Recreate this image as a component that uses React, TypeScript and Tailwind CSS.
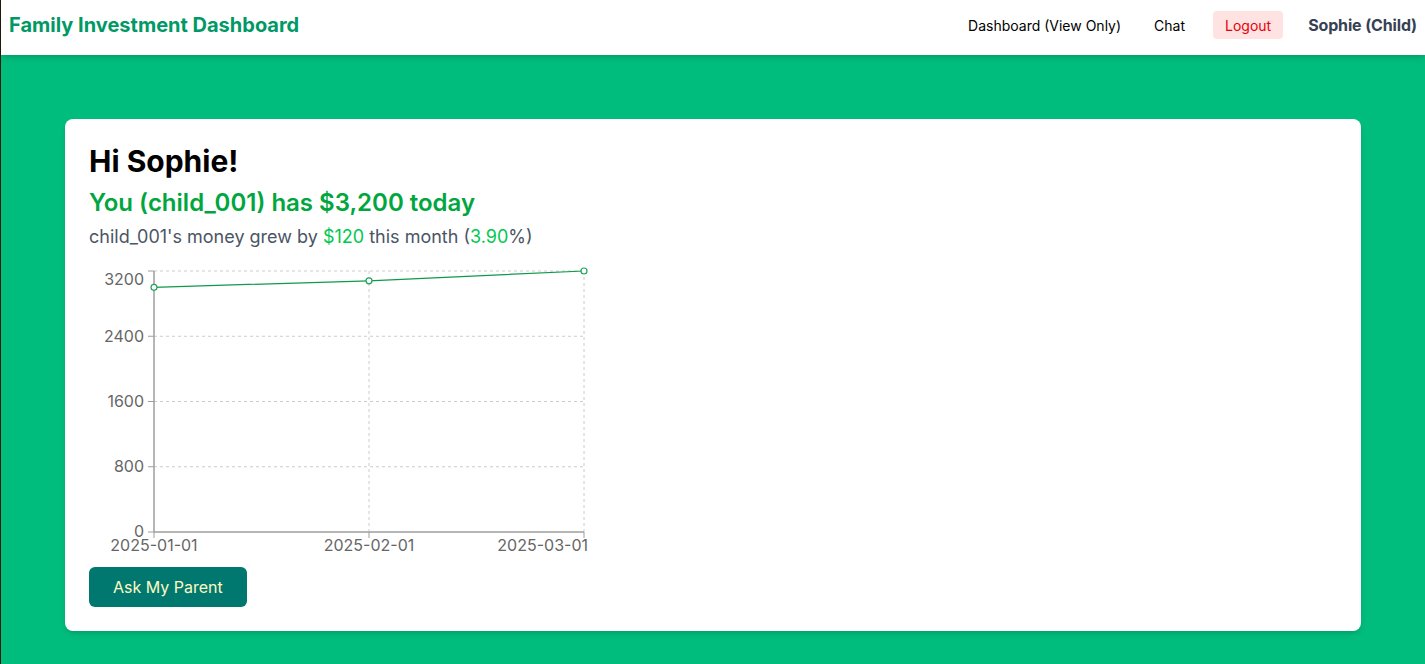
import React from "react";

const data = [
  { x: 65, v: 3000 },
  { x: 280, v: 3080 },
  { x: 495, v: 3200 },
];
const y0 = 281;
const yTop = 20;
const sy = (v: number) => y0 - (v / 3200) * (y0 - yTop);

function Chart() {
  const ticks = [0, 800, 1600, 2400, 3200];
  const pts = data.map((d) => `${d.x},${sy(d.v)}`).join(" ");
  return (
    <svg width={500} height={306} className="block" style={{ fontFamily: "Inter, sans-serif" }}>
      {ticks.slice(1).map((t) => (
        <line key={t} x1={65} x2={495} y1={sy(t)} y2={sy(t)} stroke="#cccccc" strokeDasharray="3 3" />
      ))}
      {[280, 495].map((x) => (
        <line key={x} x1={x} x2={x} y1={yTop} y2={y0} stroke="#cccccc" strokeDasharray="3 3" />
      ))}
      <line x1={65} x2={65} y1={yTop} y2={y0} stroke="#9e9e9e" strokeWidth={1.5} />
      <line x1={65} x2={495} y1={y0} y2={y0} stroke="#9e9e9e" strokeWidth={1.5} />
      {ticks.map((t) => (
        <g key={t}>
          <line x1={59} x2={65} y1={sy(t)} y2={sy(t)} stroke="#9e9e9e" />
          <text
            x={55}
            y={t === 3200 ? sy(t) + 8 : t === 0 ? sy(t) - 1 : sy(t)}
            dy="0.355em"
            textAnchor="end"
            fill="#666666"
            fontSize={16}
          >
            {t}
          </text>
        </g>
      ))}
      {[65, 280, 495].map((x) => (
        <line key={x} x1={x} x2={x} y1={y0} y2={y0 + 6} stroke="#9e9e9e" />
      ))}
      <text x={65} y={y0 + 19} textAnchor="middle" fill="#666666" fontSize={16}>2025-01-01</text>
      <text x={280} y={y0 + 19} textAnchor="middle" fill="#666666" fontSize={16}>2025-02-01</text>
      <text x={499} y={y0 + 19} textAnchor="end" fill="#666666" fontSize={16}>2025-03-01</text>
      <polyline points={pts} fill="none" stroke="#0e9a4c" strokeWidth={1.2} />
      {data.map((d) => (
        <circle key={d.x} cx={d.x} cy={sy(d.v)} r={3} fill="#ffffff" stroke="#1fa35a" strokeWidth={1.2} />
      ))}
    </svg>
  );
}

export default function App() {
  return (
    <div
      className="min-h-[664px] bg-[#00bc7d] border-l border-[#231a12]"
      style={{ fontFamily: "Inter, 'Noto Sans', sans-serif" }}
    >
      <header className="h-[55px] bg-white shadow-md flex items-center justify-between pl-[8px] pr-[8px] pb-[5px] relative z-10">
        <div className="text-[20px] font-bold text-[#009966]">Family Investment Dashboard</div>
        <nav className="flex items-center">
          <span className="text-[14px] text-black">Dashboard (View Only)</span>
          <span className="text-[14px] text-black ml-[33px]">Chat</span>
          <span className="text-[14px] text-[#e7000b] bg-[#ffe2e2] rounded ml-[28px] px-[12px] h-[28px] flex items-center">
            Logout
          </span>
          <span className="text-[16px] font-bold text-[#364153] ml-[25px] tracking-[-0.15px]">Sophie (Child)</span>
        </nav>
      </header>
      <main className="pt-16 px-16 pb-16">
        <div className="bg-white rounded-lg shadow-md p-6">
          <h1 className="text-[30px] leading-[36px] font-bold text-black">Hi Sophie!</h1>
          <h2 className="mt-2 text-[24px] leading-[32px] font-semibold text-[#00a63e]">
            You (child_001) has $3,200 today
          </h2>
          <p className="mt-1 text-[18px] leading-[28px] text-[#4a5565]">
            child_001's money grew by <span className="text-[#00c950]">$120</span> this month (
            <span className="text-[#00c950]">3.90</span>%)
          </p>
          <Chart />
          <button className="mt-[10px] bg-[#00786f] text-[#fef9c2] text-[16px] leading-[24px] px-6 py-2 rounded-md">
            Ask My Parent
          </button>
        </div>
      </main>
    </div>
  );
}
